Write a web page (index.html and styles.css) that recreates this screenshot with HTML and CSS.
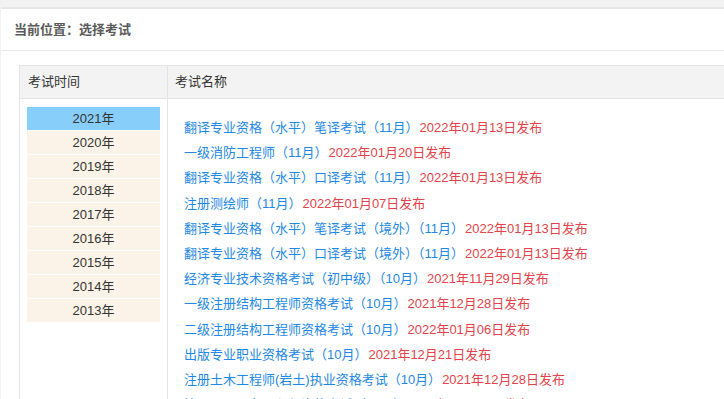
FILE: index.html
```html
<!doctype html>
<html lang="zh-CN">
	<head>
		<meta charset="UTF-8" />
		<meta name="viewport" content="width=device-width, initial-scale=1.0" />
		<title>选择考试</title>
		<link rel="stylesheet" href="styles.css">
	</head>
	<body>
		<div class="page">
			<div class="crumb">当前位置：选择考试</div>

			<div class="exam">
				<div class="head head-year">考试时间</div>
				<div class="head head-name">考试名称</div>

				<div class="years">
					<div class="year active">2021年</div>
					<div class="year">2020年</div>
					<div class="year">2019年</div>
					<div class="year">2018年</div>
					<div class="year">2017年</div>
					<div class="year">2016年</div>
					<div class="year">2015年</div>
					<div class="year">2014年</div>
					<div class="year">2013年</div>
				</div>

				<ul class="list">
					<li><a href="#">翻译专业资格（水平）笔译考试（11月）</a><span class="date">2022年01月13日发布</span></li>
					<li><a href="#">一级消防工程师（11月）</a><span class="date">2022年01月20日发布</span></li>
					<li><a href="#">翻译专业资格（水平）口译考试（11月）</a><span class="date">2022年01月13日发布</span></li>
					<li><a href="#">注册测绘师（11月）</a><span class="date">2022年01月07日发布</span></li>
					<li><a href="#">翻译专业资格（水平）笔译考试（境外）（11月）</a><span class="date">2022年01月13日发布</span></li>
					<li><a href="#">翻译专业资格（水平）口译考试（境外）（11月）</a><span class="date">2022年01月13日发布</span></li>
					<li><a href="#">经济专业技术资格考试（初中级）（10月）</a><span class="date">2021年11月29日发布</span></li>
					<li><a href="#">一级注册结构工程师资格考试（10月）</a><span class="date">2021年12月28日发布</span></li>
					<li><a href="#">二级注册结构工程师资格考试（10月）</a><span class="date">2022年01月06日发布</span></li>
					<li><a href="#">出版专业职业资格考试（10月）</a><span class="date">2021年12月21日发布</span></li>
					<li><a href="#">注册土木工程师(岩土)执业资格考试（10月）</a><span class="date">2021年12月28日发布</span></li>
					<li><a href="#">注册公用设备工程师资格考试（10月）</a><span class="date">2021年12月28日发布</span></li>
				</ul>
			</div>
		</div>
	</body>
</html>
```

FILE: styles.css
```css
body { margin: 0; background: #f2f2f2; font-family: "Liberation Sans", "Noto Sans CJK SC", sans-serif; overflow: hidden; }
.page { margin: 7px 0 0 1px; width: 1000px; min-height: 420px; background: #fff; border-top: 2px solid #e7e7eb; }
.crumb { height: 41px; line-height: 41px; padding-left: 13px; font-size: 13px; font-weight: bold; color: #5a5a5a; border-bottom: 1px solid #e8e8e8; }

.exam { display: grid; grid-template-columns: 148px 1fr; grid-template-rows: 33px auto; margin: 14px 0 0 18px; border: 1px solid #e3e3e3; border-bottom: none; }
.head { line-height: 32px; background: #f3f3f3; border-bottom: 1px solid #e3e3e3; font-size: 13px; color: #333; }
.head-year { padding-left: 8px; border-right: 1px solid #e3e3e3; }
.head-name { padding-left: 7px; }

.years { min-height: 360px; padding: 8px 7px; border-right: 1px solid #e3e3e3; }
.year { height: 23px; line-height: 23px; margin-bottom: 1px; background: #fbf3e8; text-align: center; font-size: 13px; color: #333; cursor: pointer; }
.year.active { background: #87cefa; }

.list { list-style: none; margin: 0; padding: 15px 0 0 16px; }
.list li { height: 25.2px; line-height: 25.2px; white-space: nowrap; }
.list a { font-size: 13px; color: #1e88e5; text-decoration: none; }
.list a:hover { text-decoration: underline; }
.date { margin-left: 1px; font-size: 13px; color: #e4434b; }
```
